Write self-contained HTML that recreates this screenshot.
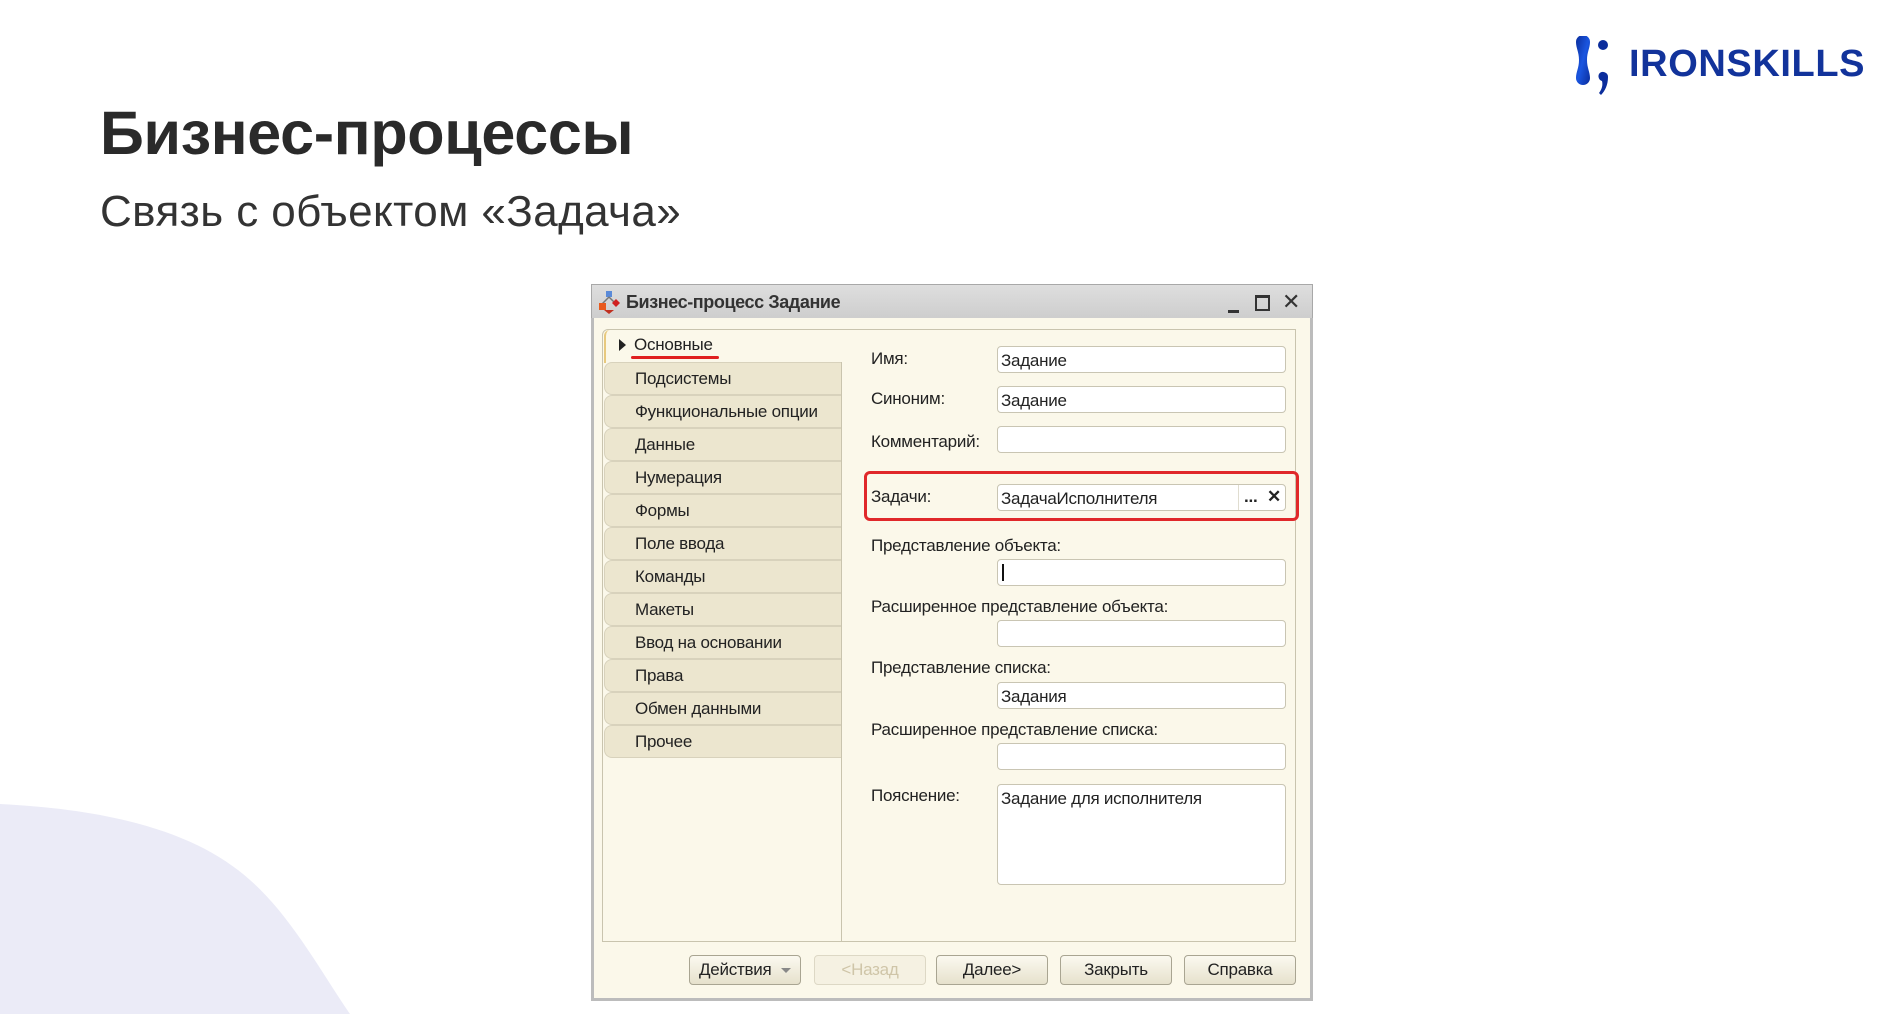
<!DOCTYPE html>
<html><head><meta charset="utf-8"><style>
*{margin:0;padding:0;box-sizing:border-box}
body{width:1889px;height:1014px;background:#fff;position:relative;overflow:hidden;font-family:"Liberation Sans",sans-serif}
.abs{position:absolute}
h1{position:absolute;left:100px;top:98px;font-size:61px;font-weight:bold;color:#2a2a2a;letter-spacing:-0.3px;white-space:nowrap}
h2{position:absolute;left:100px;top:187px;font-size:44px;font-weight:normal;color:#333;letter-spacing:0.4px;white-space:nowrap}
.dlg{left:591px;top:284px;width:722px;height:717px;background:#f7f7f7;border:1px solid #a8a8a8}
.w{font-size:17px;color:#222;letter-spacing:-0.25px;white-space:nowrap;position:absolute}
.frame{left:591px;top:318px;width:722px;height:683px;background:#fbf8ea;border:3px solid #bcbcbc;border-top:none}
.tab{position:absolute;left:604px;width:237px;height:33px;background:#ece6cf;border:1px solid #d8d2bc;border-radius:8px 0 0 8px;border-right:none}
.tab span{position:absolute;left:30px;top:6px}
.inp{position:absolute;left:997px;width:289px;height:27px;background:#fff;border:1px solid #c9c5b3;border-radius:4px}
.inp span{position:absolute;left:3px;top:4px}
.btn{position:absolute;top:955px;width:112px;height:30px;border:1px solid #a9a592;border-radius:4px;background:linear-gradient(#fbf9f0,#e6e1cc);text-align:center;line-height:28px}
</style></head><body>
<svg class="abs" style="left:0;top:790px" width="400" height="224"><path d="M0 14 C120 20 200 45 250 90 C290 125 320 180 350 224 L0 224 Z" fill="#ebebf7"/></svg>
<h1>Бизнес-процессы</h1>
<h2>Связь с объектом «Задача»</h2>

<svg class="abs" style="left:1566px;top:36px" width="48" height="68">
<defs><linearGradient id="g" x1="0" y1="0" x2="1" y2="1"><stop offset="0" stop-color="#0b2d9c"/><stop offset=".5" stop-color="#1a56e0"/><stop offset="1" stop-color="#0b2d9c"/></linearGradient></defs>
<path d="M10 6 a7 7 0 0 1 14 0 c0 6 -3 10 -3 18 c0 8 3 12 3 18 a7 7 0 0 1 -14 0 c0 -6 3 -10 3 -18 c0 -8 -3 -12 -3 -18z" fill="url(#g)"/>
<circle cx="37" cy="9" r="5" fill="#0b2d9c"/>
<path d="M33 38 a5 5 0 0 1 9 3 c0 8 -3 14 -7 18 l-2 -2 c3 -4 4 -8 3 -12 a5 5 0 0 1 -3 -7z" fill="#0b2d9c"/>
</svg>
<div class="abs" style="left:1629px;top:43px;font-size:38px;font-weight:bold;color:#12339b;letter-spacing:0.6px">IRONSKILLS</div>

<div class="abs dlg"></div>
<div class="abs" style="left:592px;top:285px;width:720px;height:34px;background:linear-gradient(#dedede,#cdcdcd)"></div>
<svg class="abs" style="left:598px;top:290px" width="22" height="24"><rect x="8" y="1" width="6" height="6" fill="#5a8ad8"/><path d="M11 7 L4 14 M11 7 L18 14" stroke="#777" stroke-width="1.5"/><rect x="1" y="13" width="7" height="7" fill="#e85a1e"/><path d="M14 13 l4 -4 l4 4 l-4 4z" fill="#d02020"/><path d="M6 20 l5 4 l5 -4z" fill="#c03020"/></svg>
<div class="w" style="left:626px;top:292px;font-weight:bold;color:#333;font-size:18px;letter-spacing:-0.4px">Бизнес-процесс Задание</div>
<div class="abs" style="left:1228px;top:310px;width:11px;height:3px;background:#333"></div>
<div class="abs" style="left:1255px;top:295px;width:15px;height:16px;border:2px solid #333;border-top-width:3px"></div>
<div class="w" style="left:1282px;top:289px;font-size:22px;color:#333">✕</div>
<div class="abs frame"></div>
<div class="abs" style="left:602px;top:329px;width:694px;height:613px;border:1px solid #c9c4ae;border-radius:6px 0 0 0;background:#fbf8ea"></div>
<div class="abs" style="left:841px;top:362px;width:1px;height:579px;background:#c9c4ae"></div>

<div class="abs" style="left:604px;top:330px;width:237px;height:33px;border-left:2px solid #e8c97e;border-radius:6px 0 0 0"></div>
<div class="abs" style="left:619px;top:339px;width:0;height:0;border-top:6px solid transparent;border-bottom:6px solid transparent;border-left:7px solid #222"></div>
<div class="w" style="left:634px;top:335px">Основные</div>
<div class="abs" style="left:631px;top:356px;width:88px;height:3px;background:#e02020;border-radius:2px"></div>

<div class="tab" style="top:362px"><span class="w">Подсистемы</span></div>
<div class="tab" style="top:395px"><span class="w">Функциональные опции</span></div>
<div class="tab" style="top:428px"><span class="w">Данные</span></div>
<div class="tab" style="top:461px"><span class="w">Нумерация</span></div>
<div class="tab" style="top:494px"><span class="w">Формы</span></div>
<div class="tab" style="top:527px"><span class="w">Поле ввода</span></div>
<div class="tab" style="top:560px"><span class="w">Команды</span></div>
<div class="tab" style="top:593px"><span class="w">Макеты</span></div>
<div class="tab" style="top:626px"><span class="w">Ввод на основании</span></div>
<div class="tab" style="top:659px"><span class="w">Права</span></div>
<div class="tab" style="top:692px"><span class="w">Обмен данными</span></div>
<div class="tab" style="top:725px"><span class="w">Прочее</span></div>

<div class="w" style="left:871px;top:349px">Имя:</div>
<div class="inp" style="top:346px"><span class="w">Задание</span></div>
<div class="w" style="left:871px;top:389px">Синоним:</div>
<div class="inp" style="top:386px"><span class="w">Задание</span></div>
<div class="w" style="left:871px;top:432px">Комментарий:</div>
<div class="inp" style="top:426px"></div>

<div class="abs" style="left:864px;top:471px;width:435px;height:50px;border:3px solid #e0282a;border-radius:6px"></div>
<div class="w" style="left:871px;top:487px">Задачи:</div>
<div class="inp" style="top:484px"><span class="w">ЗадачаИсполнителя</span>
<div class="abs" style="left:240px;top:0;width:1px;height:25px;background:#e0ddd0"></div>
<div class="w" style="left:246px;top:2px;font-weight:bold">...</div>
<div class="w" style="left:269px;top:2px;font-weight:bold;font-size:17px">✕</div></div>

<div class="w" style="left:871px;top:536px">Представление объекта:</div>
<div class="inp" style="top:559px"><div class="abs" style="left:4px;top:4px;width:2px;height:17px;background:#111"></div></div>
<div class="w" style="left:871px;top:597px">Расширенное представление объекта:</div>
<div class="inp" style="top:620px"></div>
<div class="w" style="left:871px;top:658px">Представление списка:</div>
<div class="inp" style="top:682px"><span class="w">Задания</span></div>
<div class="w" style="left:871px;top:720px">Расширенное представление списка:</div>
<div class="inp" style="top:743px"></div>
<div class="w" style="left:871px;top:786px">Пояснение:</div>
<div class="inp" style="top:784px;height:101px"><span class="w">Задание для исполнителя</span></div>

<div class="btn w" style="left:689px;text-align:left;padding-left:9px">Действия<span style="position:absolute;right:9px;top:12px;border-left:5px solid transparent;border-right:5px solid transparent;border-top:5px solid #888"></span></div>
<div class="btn w" style="left:814px;color:#cfc5a8;border-color:#ddd8c5;background:#f5f1e2">&lt;Назад</div>
<div class="btn w" style="left:936px">Далее&gt;</div>
<div class="btn w" style="left:1060px">Закрыть</div>
<div class="btn w" style="left:1184px">Справка</div>
</body></html>
